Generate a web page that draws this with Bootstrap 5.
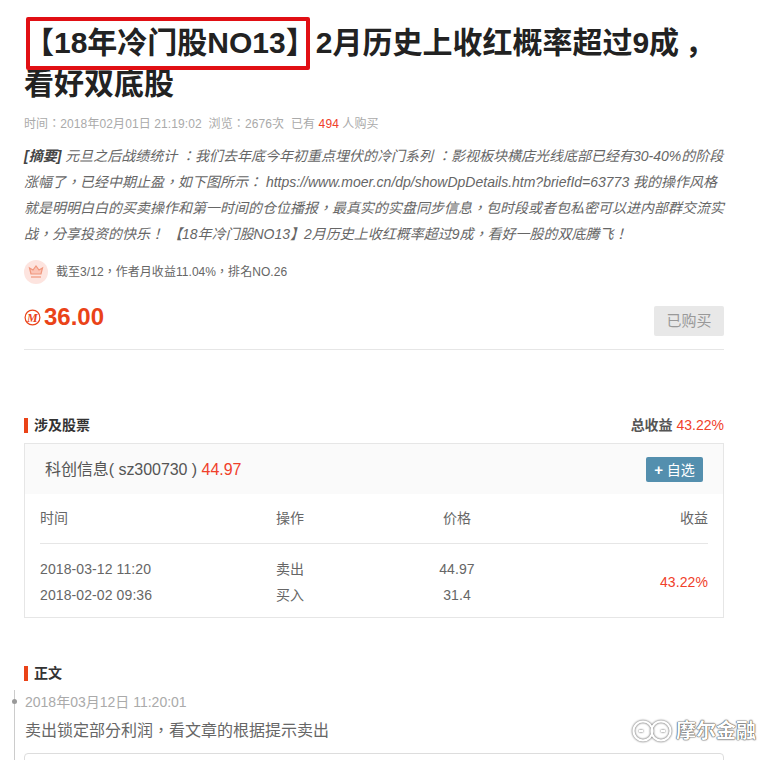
<!DOCTYPE html>
<html lang="zh"><head><meta charset="utf-8">
<link href="https://cdn.jsdelivr.net/npm/bootstrap@5.3.0/dist/css/bootstrap.min.css" rel="stylesheet">
<style>
html,body{height:760px;overflow:hidden;background:#fff}
body{font-family:"Liberation Sans","Noto Sans CJK SC",sans-serif;color:#555;font-size:14px}
.pm{margin-left:.2em}
.pg{width:700px;margin-left:24px;position:relative}
.ttl{font-size:30px;font-weight:700;line-height:41px;color:#222;margin:0;padding-top:22px}
.redbox{position:absolute;left:2px;top:17px;width:284px;height:53px;border:4px solid #e10f14;border-radius:2px}
.meta{font-size:12px;color:#aaa;margin-top:11px;line-height:18px;letter-spacing:.1px}
.red{color:#f0402a}
.abs{font-size:14px;font-style:italic;line-height:26px;color:#666;margin-top:10px}
.abs b{color:#444}
.crown{width:24px;height:24px;border-radius:50%;background:#fde4df}
.rank{font-size:12px;color:#666;margin-top:13px;gap:8px;letter-spacing:.05px}
.price{color:#ea4318;font-size:24px;font-weight:700;line-height:30px;gap:3px;margin-bottom:4px}
.bought{background:#e8e8e8;color:#999;font-size:15px;width:70px;height:30px;line-height:30px;text-align:center;border-radius:2px}
.pricerow{margin-top:18px;padding-bottom:13px;border-bottom:1px solid #e6e6e6}
.sect{font-size:14px;font-weight:700;color:#333;border-left:4px solid #ea4318;padding-left:6px;line-height:15px}
.total{font-size:14px;font-weight:700;color:#555}
.total span{font-weight:400;color:#f0402a;font-size:14px}
.stockhead{margin-top:65px}
.sbox{border:1px solid #e6e6e6;margin-top:7px;height:175px}
.shead{background:#fafafa;height:50px;padding:1px 20px 0;color:#555;font-size:16px;letter-spacing:-.05px}
.addbtn{background:#548fae;color:#fff;font-size:14px;width:57px;height:25px;line-height:25px;text-align:center;border-radius:2px;letter-spacing:0}
.addbtn b{font-size:15px}
.gridr{display:grid;grid-template-columns:236px 140px 82px 1fr;margin:0 15px;font-size:14px;color:#666}
.ghead{height:50px;align-items:center;border-bottom:1px solid #e6e6e6}
.gbody{padding-top:12px;line-height:26px;letter-spacing:.1px}
.rt{text-align:right}
.ctr{text-align:center}
.bodyhead{margin-top:48px}
.timeline{border-left:1px solid #ccc;margin-left:-10px;padding:2px 0 0 9px;margin-top:9px;height:80px;position:relative}
.dot{position:absolute;left:-3px;top:9px;width:5px;height:5px;border-radius:50%;background:#999}
.tm{font-size:14px;color:#aaa;line-height:20px;padding-left:1px}
.tx{font-size:16px;color:#666;margin-top:8px;line-height:22px;padding-left:1px}
.quote{border:1px solid #ddd;border-radius:4px;height:30px;margin-top:11px}
.wm{position:absolute;left:631px;top:717px;display:flex;align-items:center;gap:3px;color:#fff;font-size:20px;font-weight:700;line-height:28px;text-shadow:0 0 1px #444,0 0 1px #444,0 0 2px #777}
.wmi{filter:drop-shadow(0 0 1px #444)}
</style></head><body>
<div class="pg">
<h1 class="ttl">【18年冷门股NO13】2月历史上收红概率超过9成<span class="pm">，</span>看好双底股</h1>
<div class="redbox"></div>
<div class="meta" lang="zh-Hant">时间：2018年02月01日 21:19:02&nbsp; 浏览：2676次&nbsp; 已有 <span class="red">494</span> 人购买</div>
<div class="abs" lang="zh-Hant"><b>[摘要]</b> 元旦之后战绩统计 ：我们去年底今年初重点埋伏的冷门系列 ：影视板块横店光线底部已经有30-40%的阶段涨幅了，已经中期止盈，如下图所示： https://www.moer.cn/dp/showDpDetails.htm?briefId=63773 我的操作风格就是明明白白的买卖操作和第一时间的仓位播报，最真实的实盘同步信息，包时段或者包私密可以进内部群交流实战，分享投资的快乐！ 【18年冷门股NO13】2月历史上收红概率超过9成，看好一股的双底腾飞！</div>
<div class="rank d-flex align-items-center" lang="zh-Hant">
<div class="crown d-flex align-items-center justify-content-center"><svg width="16" height="14" viewBox="0 0 16 14" fill="#fbc4b6" stroke="#f0967c" stroke-width="1.2"><path d="M3 9 1.500 3 5 5l3-4 3 4 3.500-2L13 9z"/><path d="M3 12h10" fill="none"/></svg></div>
<span>截至3/12，作者月收益11.04%，排名NO.26</span></div>
<div class="pricerow d-flex justify-content-between align-items-end">
<div class="price d-flex align-items-center"><svg width="17" height="17" viewBox="0 0 17 17" fill="none"><circle cx="8.500" cy="8.500" r="7.400" stroke="#ea4318" stroke-width="1.200"/><text x="8.300" y="12.500" text-anchor="middle" font-family="Liberation Serif" font-style="italic" font-weight="700" font-size="12" fill="#ea4318">M</text></svg><span>36.00</span></div>
<div class="bought">已购买</div></div>
<div class="d-flex justify-content-between align-items-center stockhead">
<div class="sect">涉及股票</div>
<div class="total">总收益 <span>43.22%</span></div></div>
<div class="sbox">
<div class="shead d-flex justify-content-between align-items-center"><div>科创信息( sz300730 ) <span class="red">44.97</span></div><div class="addbtn"><b>+</b> 自选</div></div>
<div class="gridr ghead"><div>时间</div><div>操作</div><div class="ctr">价格</div><div class="rt">收益</div></div>
<div class="gridr gbody"><div>2018-03-12 11:20<br>2018-02-02 09:36</div><div>卖出<br>买入</div><div class="ctr">44.97<br>31.4</div><div class="rt red align-self-center">43.22%</div></div>
</div>
<div class="sect bodyhead">正文</div>
<div class="timeline"><div class="dot"></div>
<div class="tm">2018年03月12日 11:20:01</div>
<div class="tx" lang="zh-Hant">卖出锁定部分利润，看文章的根据提示卖出</div>
<div class="quote"></div></div>
</div>
<div class="wm"><svg class="wmi" width="42" height="22" viewBox="0 0 42 22" fill="none" stroke="#fff" stroke-width="2.2"><circle cx="12" cy="11" r="9.500"/><circle cx="30" cy="11" r="9.500"/><path d="M8 11h4M30 11h4"/></svg><span>摩尔金融</span></div>
</body></html>
